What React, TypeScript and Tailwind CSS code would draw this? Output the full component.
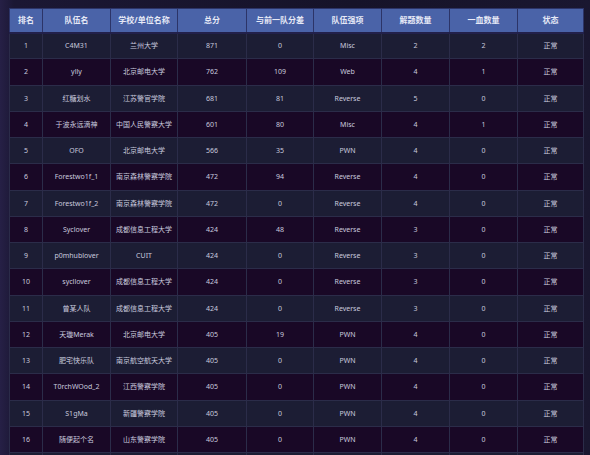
const COLS = [
  { label: "排名", w: "w-[33px]" },
  { label: "队伍名", w: "w-[68px]" },
  { label: "学校/单位名称", w: "w-[67px]" },
  { label: "总分", w: "w-[69px]" },
  { label: "与前一队分差", w: "w-[67px]" },
  { label: "队伍强项", w: "w-[68px]" },
  { label: "解题数量", w: "w-[68px]" },
  { label: "一血数量", w: "w-[68px]" },
  { label: "状态", w: "w-[66px]" },
];

const ROWS: [number, string, string, number, number, string, number, number][] = [
  [1, "C4M31", "兰州大学", 871, 0, "Misc", 2, 2],
  [2, "ylly", "北京邮电大学", 762, 109, "Web", 4, 1],
  [3, "红糖划水", "江苏警官学院", 681, 81, "Reverse", 5, 0],
  [4, "于波永远滴神", "中国人民警察大学", 601, 80, "Misc", 4, 1],
  [5, "OFO", "北京邮电大学", 566, 35, "PWN", 4, 0],
  [6, "Forestwo1f_1", "南京森林警察学院", 472, 94, "Reverse", 4, 0],
  [7, "Forestwo1f_2", "南京森林警察学院", 472, 0, "Reverse", 4, 0],
  [8, "Syclover", "成都信息工程大学", 424, 48, "Reverse", 3, 0],
  [9, "p0mhublover", "CUIT", 424, 0, "Reverse", 3, 0],
  [10, "sycllover", "成都信息工程大学", 424, 0, "Reverse", 3, 0],
  [11, "曾某人队", "成都信息工程大学", 424, 0, "Reverse", 3, 0],
  [12, "天璇Merak", "北京邮电大学", 405, 19, "PWN", 4, 0],
  [13, "肥宅快乐队", "南京航空航天大学", 405, 0, "PWN", 4, 0],
  [14, "T0rchWOod_2", "江西警察学院", 405, 0, "PWN", 4, 0],
  [15, "S1gMa", "新疆警察学院", 405, 0, "PWN", 4, 0],
  [16, "随便起个名", "山东警察学院", 405, 0, "PWN", 4, 0],
];

export default function App() {
  return (
    <div className="h-[455px] w-[590px] overflow-hidden bg-[linear-gradient(90deg,#262046_0px,#1b1734_14px,#161329_60%,#1a1730_100%)] pl-[9px] pt-[8px] font-['Noto_Sans','Noto_Sans_CJK_SC',sans-serif]">
      <table className="w-[574px] table-fixed border-collapse text-center">
        <thead>
          <tr className="h-[24px] bg-[#4a63a8]">
            {COLS.map((c) => (
              <th
                key={c.label}
                className={`${c.w} border border-[#2c3468] border-b-2 border-b-[#22204a] p-0 text-[8px] font-bold text-[#e6e9f6]`}
              >
                {c.label}
              </th>
            ))}
          </tr>
        </thead>
        <tbody>
          {ROWS.map((r) => (
            <tr
              key={r[0]}
              className={`h-[26.25px] ${r[0] % 2 === 1 ? "bg-[#1c1d34]" : "bg-[#190826]"}`}
            >
              {[...r.map(String), "正常"].map((v, i) => (
                <td
                  key={i}
                  className="border border-[#2b2c49] p-0 text-[7px] leading-none text-[#c9cadf]"
                >
                  {v}
                </td>
              ))}
            </tr>
          ))}
          {/* next row just peeks in at the bottom edge */}
          <tr className="h-[26.25px] bg-[#1c1d34]">
            {COLS.map((c) => (
              <td key={c.label} className="border border-[#2b2c49] p-0" />
            ))}
          </tr>
        </tbody>
      </table>
    </div>
  );
}
